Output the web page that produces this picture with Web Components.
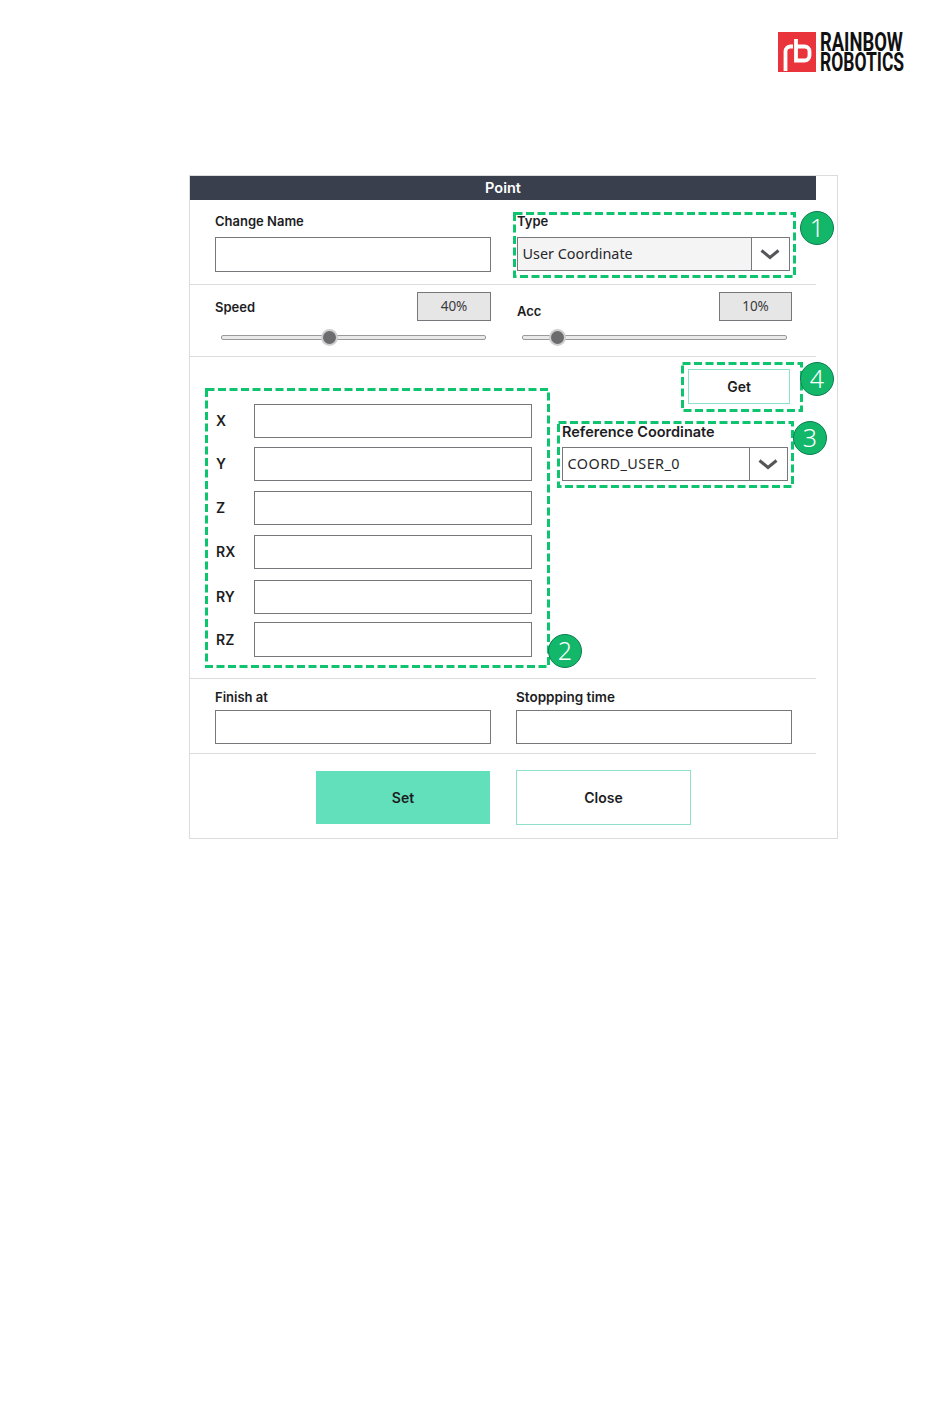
<!DOCTYPE html>
<html>
<head>
<meta charset="utf-8">
<title>Point</title>
<style>
  html, body { margin: 0; background: #fff; }
  body { width: 950px; height: 1419px; overflow: hidden; font-family: "Inter", "Noto Sans", sans-serif; }
  .page { display: flex; flex-direction: column; padding: 32px 0 0 189px; }
</style>
</head>
<body>
<div class="page">
  <rb-logo></rb-logo>
  <point-dialog></point-dialog>
</div>

<script>
// small helper, every element gets the same shadow setup
function define(name, css, html) {
  customElements.define(name, class extends HTMLElement {
    constructor() {
      super()
      this.attachShadow({ mode: 'open' })
    }
    connectedCallback() {
      var body = typeof html === 'function' ? html(this) : html
      this.shadowRoot.innerHTML = `<style>${css}</style>${body}`
    }
  })
}

var attr = (el, key, fallback) => el.getAttribute(key) || fallback

define('rb-logo', `
  :host { display: flex; align-items: flex-start; gap: 4px; margin-left: 589px; height: 143px; }
  svg { display: block; }
  .word { height: 40px; width: 85px; color: #111; padding-top: 1px; }
  .word div {
    font: 700 25px/20px Roboto, sans-serif;
    transform: scaleX(.7);
    transform-origin: left top;
    white-space: nowrap;
  }
  .word .first { transform: scaleX(.735); }
`, `
  <svg width="38" height="40" viewBox="0 0 38 40">
    <rect width="38" height="40" fill="#e8343a"/>
    <path d="M7.5 39V19.5a5 5 0 0 1 5-5h2.5M18 7v21.5h8.5a5 5 0 0 0 5-5v-4a5 5 0 0 0-5-5H18" fill="none" stroke="#fff" stroke-width="3.8"/>
  </svg>
  <div class="word"><div class="first">RAINBOW</div><div>ROBOTICS</div></div>
`)

define('field-label', `
  :host { display: block; font: 600 13px/16px "Inter", sans-serif; color: #1d1d1f; white-space: nowrap; }
`, `<slot></slot>`)

define('text-box', `
  :host { display: block; height: 34px; box-sizing: border-box; border: 1px solid #77787c; background: #fff; }
  input { display: block; width: 100%; height: 100%; box-sizing: border-box; border: 0; padding: 0; background: none; outline: none; }
`, `<input type="text">`)

define('drop-select', `
  :host {
    display: flex; height: 34px; box-sizing: border-box; border: 1px solid #77787c;
    background: var(--fill, #fff); color: #26272b;
    font: 400 14.4px/32px "Noto Sans", sans-serif;
  }
  .value { flex: 1; padding-left: 4.5px; white-space: nowrap; }
  .arrow { width: 37px; display: flex; align-items: center; justify-content: center; border-left: 1px solid #77787c; background: #fff; }
  svg { margin-right: 2px; }
`, `
  <div class="value"><slot></slot></div>
  <div class="arrow">
    <svg width="20" height="11" viewBox="0 0 20 11"><path d="M1.5 1.5 10 8.5l8.5-7" fill="none" stroke="#555659" stroke-width="3"/></svg>
  </div>
`)

define('value-box', `
  :host {
    display: block; width: 74px; height: 29px; box-sizing: border-box; border: 1px solid #77787c;
    background: #e6e6e6; color: #3a3a3d; text-align: center;
    font: 400 13.5px/27px "Noto Sans", sans-serif;
  }
`, `<slot></slot>`)

define('speed-slider', `
  :host { display: block; position: relative; height: 5px; box-sizing: border-box; border: 1px solid #9a9a9a; border-radius: 2px; background: #e9e9e9; }
  .thumb {
    position: absolute; top: -7px; width: 17px; height: 17px; margin-left: -8.5px; box-sizing: border-box;
    border-radius: 50%; background: #6c6c6f; border: 2px solid #cfcfcf;
  }
`, el => `<div class="thumb" style="left:${attr(el, 'at', '0')}px"></div>`)

define('action-button', `
  :host {
    display: flex; align-items: center; justify-content: center; box-sizing: border-box;
    background: #fff; border: 1px solid #8fe0cb; color: #1d1d1f;
    font: 600 14px/16px "Inter", sans-serif;
  }
  :host([primary]) { background: #62dfbb; border-color: #62dfbb; }
`, `<slot></slot>`)

// dashed green frame with its numbered bubble, lies over the form
define('note-frame', `
  :host { position: absolute; display: block; pointer-events: none; }
  svg { position: absolute; inset: 0; overflow: visible; }
  .num {
    position: absolute; width: 34px; height: 34px; box-sizing: border-box; margin: -17px 0 0 -17px;
    border-radius: 50%; background: #12b76a; border: 1px solid #0d7d52; color: #fff;
    font: 300 25px/31px "Noto Sans", sans-serif; text-align: center;
  }
`, el => {
  var w = +attr(el, 'w', 0), h = +attr(el, 'h', 0)
  el.style.left = attr(el, 'x', 0) + 'px'
  el.style.top = attr(el, 'y', 0) + 'px'
  el.style.width = w + 'px'
  el.style.height = h + 'px'
  return `
    <svg width="${w}" height="${h}"><rect x="1.5" y="1.5" width="${w - 3}" height="${h - 3}" fill="none" stroke="#0fc46f" stroke-width="3" stroke-dasharray="8 3.5"/></svg>
    <div class="num" style="left:${attr(el, 'nx', 0)}px;top:${attr(el, 'ny', 0)}px">${attr(el, 'num', '')}</div>`
})

define('point-dialog', `
  :host {
    display: block; position: relative; width: 649px; height: 664px; box-sizing: border-box;
    border: 1px solid #dcdcdc; background: #fff;
  }
  .bar {
    width: 626px; height: 24px; background: #3a3f4d; color: #fff; text-align: center;
    font: 600 14.5px/24px "Inter", sans-serif;
  }
  section { width: 626px; box-sizing: border-box; border-bottom: 1px solid #dcdcdc; }
  section.last { border: 0; }

  .name { height: 85px; display: flex; padding: 13px 0 0 25px; }
  .name .left { width: 276px; }
  .name .right { width: 273px; margin-left: 26px; }
  .name field-label { margin-bottom: 8px; }
  .name text-box { height: 35px; }

  .speed { height: 72px; display: flex; padding: 7px 0 0 25px; }
  .speed .left { width: 276px; }
  .speed .right { width: 275px; margin-left: 26px; }
  .top { display: flex; justify-content: space-between; align-items: center; height: 29px; }
  .right .top field-label { position: relative; top: 4px; }
  .right value-box { width: 73px; }
  speed-slider { margin: 14px 5px 0 6px; }
  .right speed-slider { margin-left: 5px; margin-right: 5px; }

  .coords { height: 322px; display: flex; }
  .rows { width: 342px; padding: 47px 0 0 26px; box-sizing: border-box; }
  .row { display: flex; align-items: center; }
  .row field-label { width: 38px; flex: none; font-size: 14px; }
  .row text-box { flex: 1; }
  .row.tall text-box { height: 35px; }
  .side { margin-left: 30px; padding-top: 12px; width: 226px; }
  .side action-button { width: 102px; height: 35px; margin-left: 126px; }
  .side field-label { margin: 20px 0 7px; font-size: 14.5px; }
  .side drop-select { letter-spacing: .45px; }

  .stop { height: 75px; display: flex; padding: 10px 0 0 25px; gap: 25px; }
  .stop div { width: 276px; }
  .stop field-label { margin-bottom: 5px; }
  .stop .wide { font-size: 13.5px; }

  .actions { display: flex; gap: 26px; padding: 16px 0 0 126px; align-items: center; }
  .actions .set { width: 174px; height: 53px; }
  .actions .close { width: 175px; height: 55px; }
`, `
  <div class="bar">Point</div>

  <section class="name">
    <div class="left">
      <field-label>Change Name</field-label>
      <text-box></text-box>
    </div>
    <div class="right">
      <field-label>Type</field-label>
      <drop-select style="--fill:#f4f4f4">User Coordinate</drop-select>
    </div>
  </section>

  <section class="speed">
    <div class="left">
      <div class="top"><field-label>Speed</field-label><value-box>40%</value-box></div>
      <speed-slider at="107"></speed-slider>
    </div>
    <div class="right">
      <div class="top"><field-label>Acc</field-label><value-box>10%</value-box></div>
      <speed-slider at="34"></speed-slider>
    </div>
  </section>

  <section class="coords">
    <div class="rows">
      <div class="row"><field-label>X</field-label><text-box></text-box></div>
      <div class="row" style="margin-top:9px"><field-label>Y</field-label><text-box></text-box></div>
      <div class="row" style="margin-top:10px"><field-label>Z</field-label><text-box></text-box></div>
      <div class="row" style="margin-top:10px"><field-label>RX</field-label><text-box></text-box></div>
      <div class="row" style="margin-top:11px"><field-label>RY</field-label><text-box></text-box></div>
      <div class="row tall" style="margin-top:8px"><field-label>RZ</field-label><text-box></text-box></div>
    </div>
    <div class="side">
      <action-button>Get</action-button>
      <field-label>Reference Coordinate</field-label>
      <drop-select>COORD_USER_0</drop-select>
    </div>
  </section>

  <section class="stop">
    <div><field-label>Finish at</field-label><text-box></text-box></div>
    <div><field-label class="wide">Stoppping time</field-label><text-box></text-box></div>
  </section>

  <section class="actions last">
    <action-button class="set" primary>Set</action-button>
    <action-button class="close">Close</action-button>
  </section>

  <note-frame x="323" y="36" w="283" h="66" num="1" nx="304" ny="16"></note-frame>
  <note-frame x="15" y="212" w="345" h="280" num="2" nx="360" ny="263"></note-frame>
  <note-frame x="367" y="245" w="237" h="67" num="3" nx="253" ny="17"></note-frame>
  <note-frame x="491" y="186" w="122" h="50" num="4" nx="136" ny="17"></note-frame>
`)
</script>
</body>
</html>
